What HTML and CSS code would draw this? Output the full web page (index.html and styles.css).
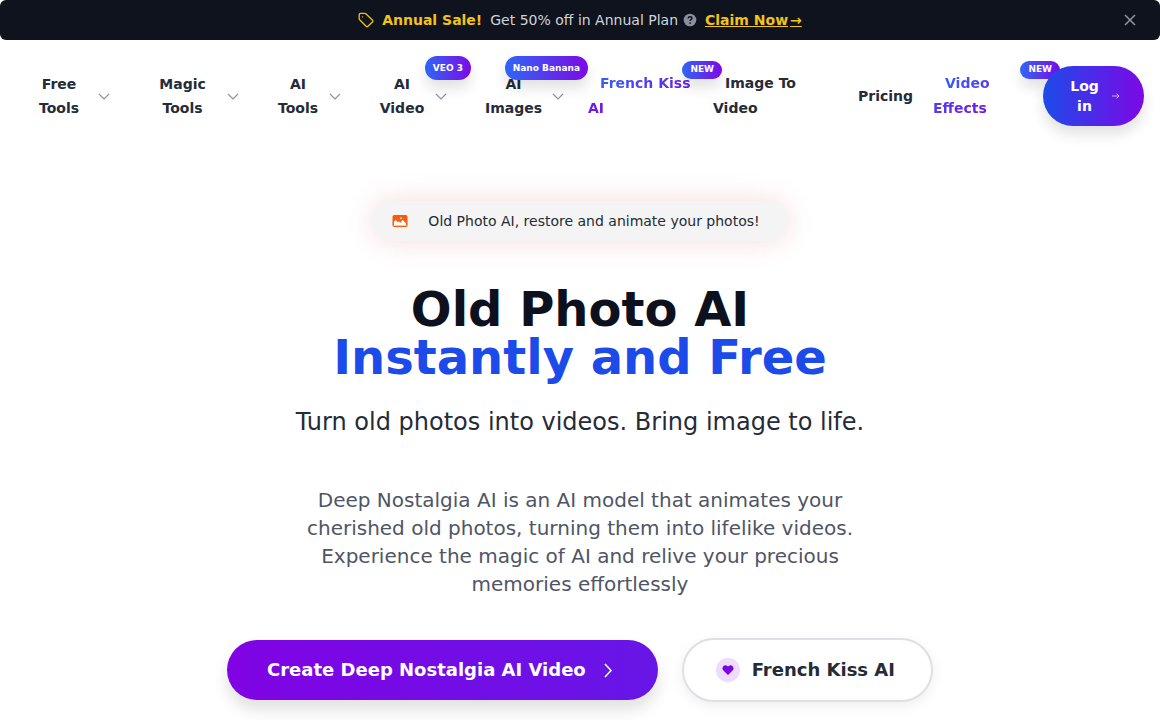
FILE: index.html
```html
<!DOCTYPE html>
<html lang="en">
<head>
<meta charset="utf-8">
<meta name="viewport" content="width=device-width, initial-scale=1">
<title>Old Photo AI</title>
<link rel="stylesheet" href="styles.css">
</head>
<body>
<aside class="promo" aria-label="Promotion">
  <div class="promo-body">
    <svg class="icon-16 tag" viewBox="0 0 24 24" aria-hidden="true"><path d="M9.6 2H3.5A1.8 1.8 0 0 0 1.8 3.7v6.4c0 .6.2 1.2.7 1.6l9.7 9.8c.8.8 2 .8 2.8 0l6.6-6.6c.8-.8.8-2 0-2.8l-9.9-9.5A2.4 2.4 0 0 0 9.6 2Z"/><path d="M6.8 7.2h.02"/></svg>
    <strong class="promo-title">Annual Sale!</strong>
    <span class="promo-text">Get 50% off in Annual Plan</span>
    <svg class="help" viewBox="0 0 16 16" aria-hidden="true"><circle cx="8" cy="8" r="7.2" fill="#8b90a0"/><path d="M5.8 6.2c.1-1.4 1-2 2.2-2s2.2.7 2.2 1.9c0 1.5-2.1 1.5-2.1 3" fill="none" stroke="#0f131d" stroke-width="1.6"/><circle cx="8.1" cy="11.5" r="1" fill="#0f131d"/></svg>
    <a class="promo-link" href="#claim"><span>Claim Now</span><span>→</span></a>
  </div>
  <button class="promo-close" type="button" aria-label="Close"><svg class="icon-16" viewBox="0 0 16 16" aria-hidden="true"><path d="M3 3l10 10M13 3L3 13"/></svg></button>
</aside>

<header class="header">
  <nav class="nav" aria-label="Main">
    <button class="menu" type="button"><span class="menu-label">Free Tools</span><svg class="chevron" viewBox="0 0 12 12" aria-hidden="true"><path d="M1 4l5 5 5-5"/></svg></button>
    <button class="menu" type="button"><span class="menu-label">Magic Tools</span><svg class="chevron" viewBox="0 0 12 12" aria-hidden="true"><path d="M1 4l5 5 5-5"/></svg></button>
    <button class="menu" type="button"><span class="menu-label">AI Tools</span><svg class="chevron" viewBox="0 0 12 12" aria-hidden="true"><path d="M1 4l5 5 5-5"/></svg></button>
    <button class="menu" type="button"><span class="menu-label">AI Video</span><svg class="chevron" viewBox="0 0 12 12" aria-hidden="true"><path d="M1 4l5 5 5-5"/></svg><span class="badge badge-menu">VEO 3</span></button>
    <button class="menu" type="button"><span class="menu-label">AI Images</span><svg class="chevron" viewBox="0 0 12 12" aria-hidden="true"><path d="M1 4l5 5 5-5"/></svg><span class="badge badge-menu">Nano Banana</span></button>
    <div class="item"><a class="link link-gradient" href="#french-kiss">French Kiss AI</a><span class="badge badge-new">NEW</span></div>
    <div class="item"><a class="link" href="#image-to-video">Image To Video</a></div>
    <div class="item item-single"><a class="link" href="#pricing">Pricing</a></div>
    <div class="item"><a class="link link-gradient" href="#effects">Video Effects</a><span class="badge badge-new badge-far">NEW</span></div>
  </nav>
  <a class="login" href="#login"><span class="login-label">Log in</span><svg class="login-arrow" viewBox="0 0 8 8" aria-hidden="true"><path d="M0 4h7M4.5 1.5L7 4 4.5 6.5"/></svg></a>
</header>

<main class="hero">
  <div class="pill">
    <svg class="icon-16" viewBox="0 0 16 16" aria-hidden="true"><rect x=".5" y="2" width="15" height="12" rx="1.8" fill="#f85b0c"/><path d="M2 12V8.600l1.800-1.600 1.900 2.200 1-1 1.600 1.500L10.800 6.700l1.800 2.200L14 10v2Z" fill="#fff"/><rect x="1.500" y="12" width="13" height="1" fill="#ffc49c"/><circle cx="9" cy="5.200" r="1" fill="#ffd9c2"/></svg>
    <span>Old Photo AI, restore and animate your photos!</span>
  </div>
  <h1 class="title">Old Photo AI<span class="title-accent">Instantly and Free</span></h1>
  <p class="subtitle">Turn old photos into videos. Bring image to life.</p>
  <p class="description">Deep Nostalgia AI is an AI model that animates your cherished old photos, turning them into lifelike videos. Experience the magic of AI and relive your precious memories effortlessly</p>
  <div class="actions">
    <a class="cta cta-primary" href="#create"><span>Create Deep Nostalgia AI Video</span><svg class="cta-arrow" viewBox="0 0 20 20" aria-hidden="true"><path d="M7 4l6 6.500L7 17"/></svg></a>
    <a class="cta cta-secondary" href="#kiss"><span class="heart"><svg class="heart-icon" viewBox="0 0 12 12" aria-hidden="true"><path d="M6 11L1.200 6.300C-1.100 3.700 2.500-.300 5.400 2.100L6 2.700l.6-.6C9.500-.300 13.100 3.700 10.800 6.300Z"/></svg></span><span>French Kiss AI</span></a>
  </div>
</main>
</body>
</html>
```

FILE: styles.css
```css
* {
  box-sizing: border-box;
}

body {
  margin: 0;
  overflow-x: hidden;
  background: #fff;
  color: #252b37;
  font-family: "DejaVu Sans", sans-serif;
  font-size: 14px;
  line-height: 24px;
}

button {
  border: 0;
  padding: 0;
  background: none;
  color: inherit;
  font: inherit;
  cursor: pointer;
}

a {
  color: inherit;
  text-decoration: none;
}

svg {
  flex: none;
}

.icon-16 {
  width: 16px;
  height: 16px;
}

/* Promotion bar */
.promo {
  display: flex;
  align-items: center;
  padding: 8px 22px;
  border-radius: 6px;
  background: #0f131d;
}

.promo-body {
  flex: 1;
  display: flex;
  align-items: center;
  justify-content: center;
  gap: 8px;
  padding-left: 16px;
  line-height: 20px;
}

.tag {
  fill: none;
  stroke: #eabf18;
  stroke-width: 2;
  stroke-linecap: round;
}

.promo-title,
.promo-link {
  color: #f2c318;
  font-weight: 700;
}

.promo-text {
  margin-right: -3px;
  color: #d1d5dc;
}

.help {
  width: 14px;
  height: 14px;
}

.promo-link {
  display: flex;
  gap: 2px;
  text-decoration: underline;
}

.promo-close {
  display: flex;
  height: 24px;
  align-items: center;
}

.promo-close svg {
  fill: none;
  stroke: #9297a5;
  stroke-width: 1.5;
}

/* Header */
.header {
  display: flex;
  align-items: center;
  gap: 12px;
  padding: 26px 16px;
}

.nav {
  flex: 1;
  display: grid;
  grid-template-columns: 106fr 117fr 90fr 94fr 105fr 113fr 121fr 75fr 98fr;
  gap: 12px;
  align-items: center;
  font-weight: 700;
}

.menu {
  position: relative;
  display: flex;
  align-items: center;
  gap: 8px;
  min-width: 0;
  padding: 0 12px;
}

.menu-label {
  flex: 1;
  min-width: 0;
  text-align: center;
}

.chevron {
  width: 12px;
  height: 12px;
  fill: none;
  stroke: #8f949e;
  stroke-width: 1.2;
}

.item {
  position: relative;
  min-width: 0;
  line-height: 25px;
}

.item-single {
  white-space: nowrap;
}

.link {
  padding: 0 12px;
}

.link-gradient,
.badge {
  background: linear-gradient(90deg, #2f66f6, #7c0be5);
}

.link-gradient {
  -webkit-background-clip: text;
  background-clip: text;
  color: transparent;
}

.badge {
  position: absolute;
  padding: 0 8px;
  border-radius: 12px;
  box-shadow: 0 8px 14px rgba(0, 0, 0, 0.12);
  color: #fff;
  font-size: 9px;
  font-weight: 700;
  white-space: nowrap;
}

.badge-menu {
  top: -16px;
  right: -12px;
  line-height: 24px;
}

.badge-new {
  top: -10px;
  right: -21px;
  padding-bottom: 2px;
  line-height: 16px;
}

.badge-far {
  right: -29px;
}

.login {
  position: relative;
  display: flex;
  align-items: center;
  gap: 10px;
  width: 101px;
  padding: 10px 24px;
  border-radius: 30px;
  background: linear-gradient(90deg, #1d4be9, #7c08e6);
  box-shadow: 0 8px 14px rgba(0, 0, 0, 0.12);
  color: #fff;
  font-weight: 700;
  line-height: 20px;
}

.login-label {
  flex: 1;
  text-align: center;
}

.login-arrow {
  width: 8px;
  height: 8px;
  fill: none;
  stroke: #e4d4ff;
  stroke-width: 0.8;
}

/* Hero */
.hero {
  display: flex;
  flex-direction: column;
  align-items: center;
  padding: 49px 16px 18px;
  text-align: center;
}

.pill {
  display: flex;
  align-items: center;
  gap: 20px;
  padding: 8px 28px 8px 20px;
  border-radius: 20px;
  background: #f4f4f4;
  box-shadow: 0 0 28px rgba(200, 80, 70, 0.2);
}

.title {
  margin: 44px 0 0;
  color: #0c111d;
  font-size: 48px;
  font-weight: 700;
  line-height: 48px;
}

.title-accent {
  display: block;
  color: #1d4be9;
}

.subtitle {
  margin: 25px 0 0;
  font-size: 24px;
  line-height: 32px;
}

.description {
  max-width: 576px;
  margin: 48px 0 0;
  color: #4f5565;
  font-size: 20px;
  line-height: 28px;
}

.actions {
  display: flex;
  flex-wrap: wrap;
  align-items: center;
  justify-content: center;
  gap: 24px;
  margin-top: 40px;
}

.cta {
  display: flex;
  align-items: center;
  border-radius: 32px;
  font-size: 18px;
  font-weight: 700;
  line-height: 28px;
}

.cta-primary {
  gap: 12px;
  padding: 16px 40px;
  background: linear-gradient(90deg, #8003e3, #6716e7);
  box-shadow: 0 10px 16px rgba(0, 0, 0, 0.12);
  color: #fff;
}

.cta-arrow {
  width: 20px;
  height: 20px;
  fill: none;
  stroke: #fff;
  stroke-width: 1.5;
}

.cta-secondary {
  gap: 12px;
  padding: 16px 36px 16px 32px;
  border: 2px solid #dfdfe4;
  background: #fff;
  box-shadow: 0 4px 14px rgba(0, 0, 0, 0.07);
}

.heart {
  display: flex;
  align-items: center;
  justify-content: center;
  width: 24px;
  height: 24px;
  border-radius: 50%;
  background: #eddcfc;
}

.heart-icon {
  width: 12px;
  height: 12px;
  fill: #7c03e3;
}
```
